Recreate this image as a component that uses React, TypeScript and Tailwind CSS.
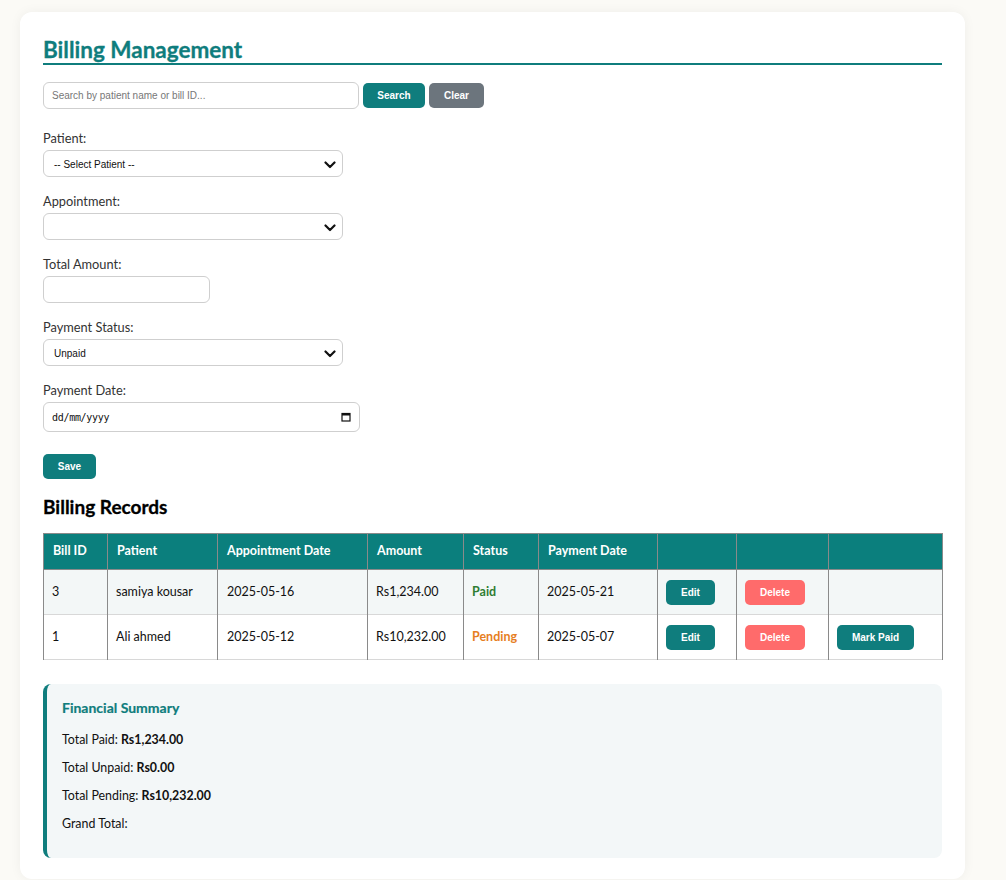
import React from 'react';

const ui = "font-['Lato','Noto_Sans',sans-serif]";
const arial = "font-['Liberation_Sans',Arial,sans-serif]";

interface Bill {
  id: number;
  patient: string;
  apptDate: string;
  amount: string;
  status: 'Paid' | 'Pending';
  payDate: string;
}

const bills: Bill[] = [
  { id: 3, patient: 'samiya kousar', apptDate: '2025-05-16', amount: 'Rs1,234.00', status: 'Paid', payDate: '2025-05-21' },
  { id: 1, patient: 'Ali ahmed', apptDate: '2025-05-12', amount: 'Rs10,232.00', status: 'Pending', payDate: '2025-05-07' },
];

function Chevron() {
  return (
    <svg width="12" height="8" viewBox="0 0 12 8" className="absolute right-[6px] top-[10px]">
      <path d="M1.5 1.5 L6 6 L10.5 1.5" fill="none" stroke="#111" strokeWidth="2.2" strokeLinecap="round" strokeLinejoin="round" />
    </svg>
  );
}

function FakeSelect({ value, width }: { value: string; width: string }) {
  return (
    <div className={`relative h-[27px] ${width} rounded-[6px] border border-[#cfcfcf] bg-white`}>
      <span className={`${arial} absolute left-[10px] top-[6px] text-[10px] text-[#111]`}>{value}</span>
      <Chevron />
    </div>
  );
}

function Label({ children }: { children: React.ReactNode }) {
  return <div className="mb-[4px] pt-[2px] text-[12.8px] leading-[16px] text-[#333]">{children}</div>;
}

function SmallBtn({ children, color, w }: { children: React.ReactNode; color: string; w: string }) {
  return (
    <button className={`${arial} ${color} ${w} h-[25px] rounded-[5px] text-[10px] font-bold text-white`}>{children}</button>
  );
}

export default function App() {
  return (
    <div className={`${ui} min-h-[880px] bg-[#fbfaf6] pt-[12px] pl-[20px]`}>
      <div className="w-[945px] rounded-[12px] bg-white px-[23px] pt-[24px] pb-[21px] shadow-[0_0_12px_rgba(0,0,0,0.05)]">
        <h2 className="border-b-2 border-[#0f7d7d] text-[22.5px] font-bold leading-[27px] text-[#0f7d7d] [-webkit-text-stroke:0.3px_#0f7d7d]">Billing Management</h2>

        <div className="mt-[17px] flex items-center gap-[4px]">
          <div className="flex h-[27px] w-[316px] items-center rounded-[6px] border border-[#cfcfcf] bg-white pl-[8px]">
            <span className={`${arial} text-[10px] text-[#777]`}>Search by patient name or bill ID...</span>
          </div>
          <SmallBtn color="bg-[#0f7d7d]" w="w-[62px]">Search</SmallBtn>
          <SmallBtn color="bg-[#6c757d]" w="w-[55px]">Clear</SmallBtn>
        </div>

        <div className="mt-[19px]">
          <Label>Patient:</Label>
          <FakeSelect value="-- Select Patient --" width="w-[300px]" />
        </div>
        <div className="mt-[14px]">
          <Label>Appointment:</Label>
          <FakeSelect value="" width="w-[300px]" />
        </div>
        <div className="mt-[14px]">
          <Label>Total Amount:</Label>
          <div className="h-[27px] w-[167px] rounded-[6px] border border-[#cfcfcf] bg-white" />
        </div>
        <div className="mt-[14px]">
          <Label>Payment Status:</Label>
          <FakeSelect value="Unpaid" width="w-[300px]" />
        </div>
        <div className="mt-[14px]">
          <Label>Payment Date:</Label>
          <div className="relative flex h-[30px] w-[317px] items-center rounded-[6px] border border-[#cfcfcf] bg-white pl-[8px]">
            <span className="font-['DejaVu_Sans_Mono',monospace] text-[10px] tracking-[-0.3px] text-[#111]">dd/mm/yyyy</span>
            <svg width="10" height="10" viewBox="0 0 10 10" className="absolute right-[8px] top-[9px]">
              <rect x="1" y="1.5" width="8" height="7.5" fill="none" stroke="#111" strokeWidth="1.2" />
              <rect x="1" y="1.5" width="8" height="2" fill="#111" />
            </svg>
          </div>
        </div>
        <div className="mt-[20px]">
          <SmallBtn color="bg-[#0f7d7d]" w="w-[53px]">Save</SmallBtn>
        </div>

        <h3 className="mt-[17px] text-[19px] font-bold leading-[22px] text-black [-webkit-text-stroke:0.3px_#000]">Billing Records</h3>

        <table className="mt-[15px] w-[900px] table-fixed border-collapse text-[12.5px]">
          <thead>
            <tr className="h-[36px] bg-[#0b7f7d] text-left font-bold text-white">
              <th className="w-[64px] border border-[#8a8a8a] pl-[9px]">Bill ID</th>
              <th className="w-[110px] border border-[#8a8a8a] pl-[9px]">Patient</th>
              <th className="w-[150px] border border-[#8a8a8a] pl-[9px]">Appointment Date</th>
              <th className="w-[96px] border border-[#8a8a8a] pl-[9px]">Amount</th>
              <th className="w-[75px] border border-[#8a8a8a] pl-[9px]">Status</th>
              <th className="w-[119px] border border-[#8a8a8a] pl-[9px]">Payment Date</th>
              <th className="w-[79px] border border-[#8a8a8a]"></th>
              <th className="w-[92px] border border-[#8a8a8a]"></th>
              <th className="border border-[#8a8a8a]"></th>
            </tr>
          </thead>
          <tbody>
            {bills.map((b, i) => (
              <tr key={b.id} className={`h-[45px] border-b border-[#d8d8d8] ${i === 0 ? 'bg-[#f3f7f7]' : 'bg-white'} text-[#111]`}>
                <td className="border-x border-[#8a8a8a] pl-[8px]">{b.id}</td>
                <td className="border-x border-[#8a8a8a] pl-[8px]">{b.patient}</td>
                <td className="border-x border-[#8a8a8a] pl-[9px]">{b.apptDate}</td>
                <td className="border-x border-[#8a8a8a] pl-[8px]">{b.amount}</td>
                <td className={`border-x border-[#8a8a8a] pl-[8px] font-bold ${b.status === 'Paid' ? 'text-[#2e7d32]' : 'text-[#e67e22]'}`}>{b.status}</td>
                <td className="border-x border-[#8a8a8a] pl-[8px]">{b.payDate}</td>
                <td className="border-x border-[#8a8a8a] pl-[8px]">
                  <SmallBtn color="bg-[#0f7d7d]" w="w-[49px]">Edit</SmallBtn>
                </td>
                <td className="border-x border-[#8a8a8a] pl-[8px]">
                  <SmallBtn color="bg-[#ff6b6b]" w="w-[60px]">Delete</SmallBtn>
                </td>
                <td className="border-x border-[#8a8a8a] pl-[8px]">
                  {b.status === 'Pending' && <SmallBtn color="bg-[#0f7d7d]" w="w-[77px]">Mark Paid</SmallBtn>}
                </td>
              </tr>
            ))}
          </tbody>
        </table>

        <div className="mt-[24px] rounded-[8px] border-l-4 border-[#0f7d7d] bg-[#f3f7f8] pl-[15px] pt-[15px] pb-[25px] text-[12.4px] text-[#111]">
          <div className="text-[14px] font-bold leading-[18px] text-[#0f7d7d] [-webkit-text-stroke:0.2px_#0f7d7d]">Financial Summary</div>
          <p className="mt-[14px] leading-[18px]">Total Paid: <b>Rs1,234.00</b></p>
          <p className="mt-[10px] leading-[18px]">Total Unpaid: <b>Rs0.00</b></p>
          <p className="mt-[10px] leading-[18px]">Total Pending: <b>Rs10,232.00</b></p>
          <p className="mt-[10px] leading-[18px]">Grand Total:</p>
        </div>
      </div>
    </div>
  );
}
